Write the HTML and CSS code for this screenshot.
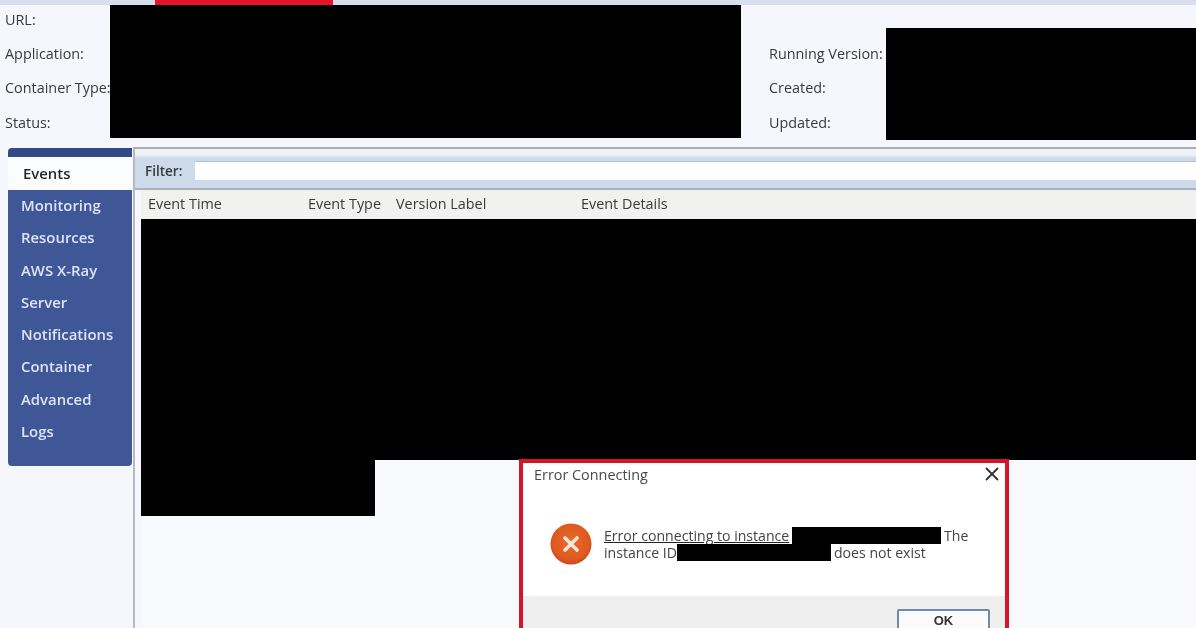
FILE: index.html
```html
<!DOCTYPE html>
<html lang="en">
<head>
<meta charset="utf-8">
<title>Error Connecting</title>
<link rel="stylesheet" href="styles.css">
</head>
<body>
<div class="page">
  <div class="topbar"><div class="red-tab"></div></div>
  <header class="info">
    <div class="labels labels-left">
      <div class="label">URL:</div>
      <div class="label">Application:</div>
      <div class="label">Container Type:</div>
      <div class="label">Status:</div>
    </div>
    <div class="mask mask-left"></div>
    <div class="labels labels-right">
      <div class="label">Running Version:</div>
      <div class="label">Created:</div>
      <div class="label">Updated:</div>
    </div>
    <div class="mask mask-right"></div>
  </header>
  <div class="workspace">
    <nav class="sidebar">
      <div class="tab active">Events</div>
      <div class="tab">Monitoring</div>
      <div class="tab">Resources</div>
      <div class="tab">AWS X-Ray</div>
      <div class="tab">Server</div>
      <div class="tab">Notifications</div>
      <div class="tab">Container</div>
      <div class="tab">Advanced</div>
      <div class="tab">Logs</div>
    </nav>
    <main class="panel">
      <div class="filter">
        <span class="filter-label">Filter:</span>
        <div class="filter-input"></div>
      </div>
      <div class="table">
        <div class="thead">
          <span class="col col-time">Event Time</span>
          <span class="col col-type">Event Type</span>
          <span class="col col-version">Version Label</span>
          <span class="col">Event Details</span>
        </div>
        <div class="rows-wide"></div>
        <div class="rows-narrow"></div>
      </div>
    </main>
  </div>
  <section class="dialog">
    <div class="dialog-title">
      <span>Error Connecting</span>
      <svg class="close" viewBox="0 0 14 14" aria-hidden="true"><path d="M1 1L13 13M13 1L1 13"/></svg>
    </div>
    <div class="dialog-body">
      <svg class="err" viewBox="0 0 42 42" aria-hidden="true">
        <defs>
          <radialGradient id="errfill" cx="50%" cy="45%" r="55%">
            <stop offset="0" stop-color="#ea6a2a"/>
            <stop offset="0.8" stop-color="#de5a20"/>
            <stop offset="1" stop-color="#c9481a"/>
          </radialGradient>
        </defs>
        <circle cx="21" cy="21" r="20.5" fill="url(#errfill)"/>
        <path d="M15 15L27 27M27 15L15 27" stroke="#fbe6d8" stroke-width="3.6" stroke-linecap="round"/>
      </svg>
      <div class="msg">
        <div class="line"><span class="under">Error connecting to instance</span><span class="redact r1"></span><span>The</span></div>
        <div class="line"><span class="iid">instance ID</span><span class="redact r2"></span><span>does not exist</span></div>
      </div>
    </div>
    <div class="dialog-foot"><button class="ok">OK</button></div>
  </section>
</div>
</body>
</html>
```
FILE: styles.css
```css
* { box-sizing: border-box; }
html, body { margin: 0; height: 100%; }
body { overflow: hidden; background: #f5f7fc; }
.page {
  position: relative;
  width: 1196px;
  height: 628px;
  overflow: hidden;
  font-family: "Open Sans", "Noto Sans", sans-serif;
  font-size: 14.4px;
  color: #3a3a3a;
  background: #f5f7fc;
  filter: blur(0.45px);
}
.topbar { height: 5px; background: #d9deef; padding-left: 155px; }
.red-tab { width: 178px; height: 5px; background: #e4152b; }
.info { display: flex; height: 142px; align-items: flex-start; }
.labels { flex: none; white-space: nowrap; }
.labels-left { width: 110px; padding-left: 5px; margin-top: -2.5px; }
.label { height: 34.4px; line-height: 34.4px; }
.mask { background: #000; flex: none; }
.mask-left { width: 631px; height: 133px; }
.labels-right { width: 117px; margin-left: 28px; padding-top: 32px; }
.mask-right { flex: 1; height: 112px; margin-top: 23px; }
.workspace { display: flex; height: 481px; }
.sidebar {
  width: 124px;
  height: 318px;
  margin: 1px 0 0 8px;
  padding-bottom: 4px;
  background: #3f5796;
  border-top: 9px solid #304a88;
  border-radius: 4px 0 4px 4px;
  flex: none;
}
.tab {
  height: 32.3px;
  line-height: 30px;
  padding-left: 13px;
  color: #dbe4f7;
  font-weight: 600;
  font-size: 14.9px;
}
.tab.active {
  height: 33px;
  line-height: 32px;
  background: #fbfcfd;
  color: #26262c;
  padding-left: 15px;
}
.panel {
  flex: 1;
  margin-left: 1px;
  border-left: 2px solid #b6b9c0;
  border-top: 2px solid #a9adb6;
  display: flex;
  flex-direction: column;
  min-width: 0;
}
.filter {
  height: 41px;
  padding: 12px 0 8px 10px;
  display: flex;
  align-items: center;
  background: linear-gradient(#f1f3f8 0, #eef1f7 6px, #cddaea 9px, #cddaea 100%);
  border-bottom: 2px solid #aab1bd;
  flex: none;
}
.filter-label { width: 50px; font-weight: 600; color: #35393f; font-size: 13.5px; }
.filter-input { flex: 1; height: 19px; background: #fefefe; border-top: 1px solid #b4bfcd; }
.table { margin-left: 6px; flex: 1; background: #f8f9fc; }
.thead {
  height: 29px;
  padding: 0 0 2px 7px;
  background: #f1f1f0;
  display: flex;
  align-items: center;
}
.col { white-space: nowrap; }
.col-time { width: 160px; }
.col-type { width: 88px; }
.col-version { width: 185px; }
.rows-wide { height: 241px; background: #000; }
.rows-narrow { width: 234px; height: 56px; background: #000; }
.dialog {
  position: absolute;
  left: 519px;
  top: 459px;
  width: 490px;
  height: 180px;
  border: 4px solid #d5152b;
  background: #fff;
  color: #4a4a4a;
  display: flex;
  flex-direction: column;
}
.dialog-title {
  height: 22px;
  padding: 0 6px 0 11px;
  display: flex;
  justify-content: space-between;
  align-items: center;
  font-size: 14.4px;
  flex: none;
}
.close { width: 14px; height: 14px; fill: none; stroke: #333; stroke-width: 1.8; }
.dialog-body { height: 111px; flex: none; display: flex; align-items: center; padding: 2px 0 0 27px; }
.err { width: 42px; height: 42px; flex: none; margin-top: 6px; margin-bottom: 2px; }
.msg { margin: 4px 0 0 12px; font-size: 14.1px; line-height: 17px; color: #444; }
.line { display: flex; align-items: center; white-space: nowrap; }
.under { text-decoration: underline; text-decoration-color: #222; width: 188px; }
.iid { width: 73px; }
.redact { display: block; background: #000; height: 17px; flex: none; }
.r1 { width: 149px; margin-right: 3px; }
.r2 { width: 154px; margin-right: 3px; }
.dialog-foot {
  flex: 1;
  background: #efefef;
  padding: 13px 15px 0 0;
  display: flex;
  justify-content: flex-end;
  align-items: flex-start;
}
.ok {
  width: 93px;
  height: 30px;
  padding: 0 0 7px;
  background: #fbfbfb;
  border: 2px solid #6f8ba8;
  border-radius: 2px;
  font: 700 13px/13px "Liberation Sans", sans-serif;
  color: #333;
}
```
